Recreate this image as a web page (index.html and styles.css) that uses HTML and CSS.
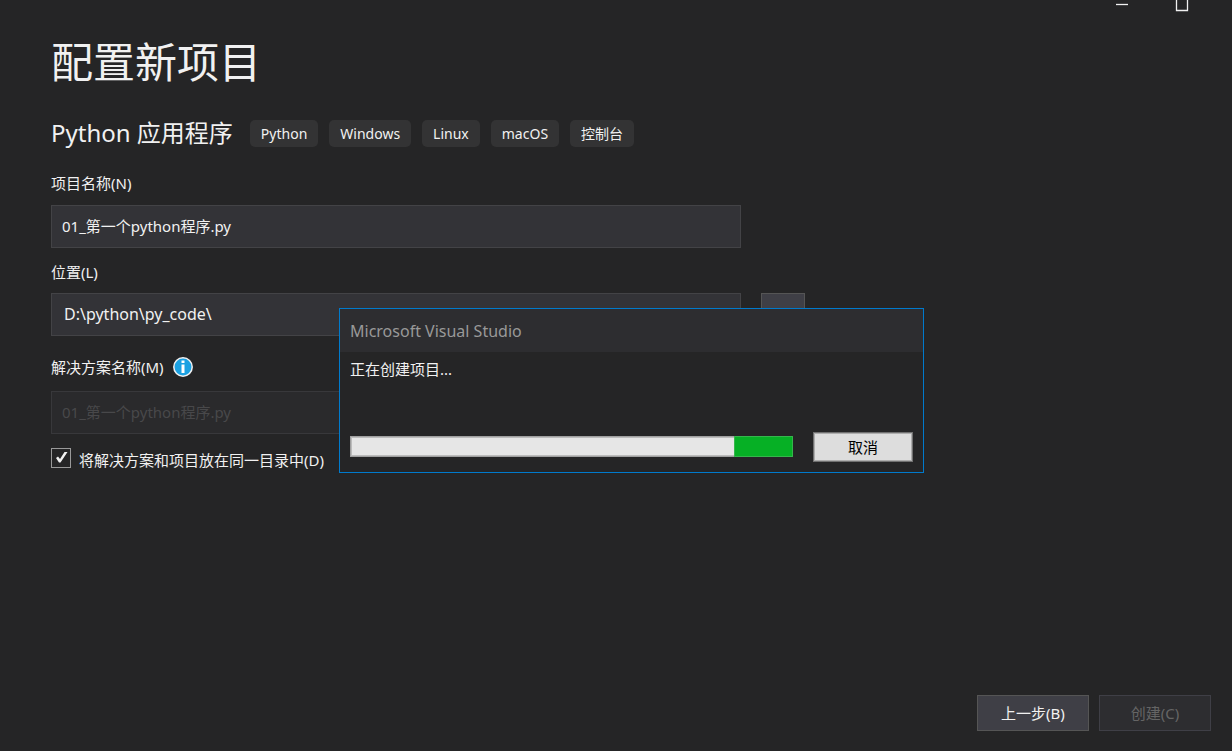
FILE: index.html
```html
<!DOCTYPE html>
<html lang="zh-CN">
<head>
<meta charset="utf-8">
<meta name="viewport" content="width=device-width, initial-scale=1">
<title>配置新项目</title>
<link rel="stylesheet" href="styles.css">
</head>
<body class="window">
<header class="titlebar">
  <button class="caption" type="button" aria-label="最小化"><svg width="14" height="12" viewBox="0 0 14 12"><path d="M1 4.500h12" stroke="#f1f1f1" stroke-width="1.300"/></svg></button>
  <button class="caption" type="button" aria-label="最大化"><svg width="14" height="12" viewBox="0 0 14 12"><path d="M1.500 -1v11.500h11v-11.500" fill="none" stroke="#f1f1f1" stroke-width="1.300"/></svg></button>
</header>
<main class="content">
  <h1 class="title">配置新项目</h1>
  <div class="template">
    <h2 class="template-name">Python 应用程序</h2>
    <ul class="tags">
      <li class="tag">Python</li>
      <li class="tag">Windows</li>
      <li class="tag">Linux</li>
      <li class="tag">macOS</li>
      <li class="tag">控制台</li>
    </ul>
  </div>
  <form class="form">
    <div class="field name-field">
      <label class="label" for="name">项目名称(N)</label>
      <input class="input" id="name" type="text" value="01_第一个python程序.py">
    </div>
    <div class="field location-field">
      <label class="label" for="location">位置(L)</label>
      <div class="input-row">
        <input class="input path" id="location" type="text" value="D:\python\py_code\">
        <button class="button browse" type="button" aria-label="浏览"></button>
      </div>
    </div>
    <div class="field solution-field">
      <div class="label-row">
        <label class="label" for="solution">解决方案名称(M)</label>
        <svg class="info" width="20" height="20" viewBox="0 0 20 20" aria-hidden="true"><circle cx="10" cy="10" r="9.200" fill="#1ba1e2" stroke="#f1f1f1" stroke-width="1.500"/><path d="M8.500 3.500h3v2.500h-3zM8.500 7.500h3v8.500h-3z" fill="#fff"/></svg>
      </div>
      <input class="input" id="solution" type="text" value="01_第一个python程序.py" disabled>
    </div>
    <div class="check-row">
      <input class="check" id="same" type="checkbox" checked>
      <label class="check-label" for="same">将解决方案和项目放在同一目录中(D)</label>
    </div>
  </form>
</main>
<footer class="footer">
  <button class="button action" type="button">上一步(B)</button>
  <button class="button action" type="button" disabled>创建(C)</button>
</footer>
<section class="dialog" role="dialog" aria-labelledby="dialog-title">
  <h2 class="dialog-title" id="dialog-title">Microsoft Visual Studio</h2>
  <div class="dialog-body">
    <p class="message">正在创建项目...</p>
    <div class="dialog-actions">
      <div class="progress" role="progressbar" aria-label="正在创建项目"><div class="progress-block"></div></div>
      <button class="cancel" type="button">取消</button>
    </div>
  </div>
</section>
</body>
</html>
```
FILE: styles.css
```css
* { box-sizing: border-box; }

.window {
  position: relative;
  display: flex;
  flex-direction: column;
  min-height: 100vh;
  margin: 0;
  background: #252526;
  color: #f1f1f1;
  font: 15px/20px "Noto Sans", "Noto Sans CJK SC", sans-serif;
}

button, input { font: inherit; color: inherit; }

.titlebar {
  display: flex;
  justify-content: flex-end;
  height: 12px;
  padding-right: 20px;
}
.caption {
  display: flex;
  justify-content: center;
  width: 60px;
  padding: 0;
  border: 0;
  background: none;
}

.content { flex: 1; padding: 22px 21px 24px 51px; }
.title { margin: 0; font-size: 42px; line-height: 56px; font-weight: 400; }
.template { display: flex; align-items: center; gap: 17px; margin-top: 27px; }
.template-name { margin: 0; font-size: 24px; line-height: 32px; font-weight: 400; }
.tags { display: flex; gap: 11px; margin: 0; padding: 0; list-style: none; }
.tag {
  padding: 4px 11px 3px;
  border-radius: 5px;
  background: #333334;
  font-size: 14px;
}

.form { max-width: 754px; margin-top: 24px; }
.field { display: flex; flex-direction: column; }
.name-field { gap: 12px; }
.location-field { gap: 11px; margin-top: 14px; }
.solution-field { gap: 14px; margin-top: 21px; }
.label-row { display: flex; align-items: center; gap: 9px; }
.input-row { display: flex; gap: 20px; }
.input {
  width: 100%;
  max-width: 690px;
  height: 43px;
  padding: 0 10px 2px;
  border: 1px solid #434346;
  background: #333337;
}
.path { padding-left: 12px; font-size: 16px; }
.input:disabled { border-color: #38383b; background: #2a2a2c; color: #48484a; }
.button { border: 1px solid #555555; background: #3f3f46; }
.browse { flex: 0 0 44px; height: 43px; }
.check-row { display: flex; align-items: flex-start; gap: 8px; margin-top: 14px; }
.check {
  appearance: none;
  width: 20px;
  height: 20px;
  margin: 0;
  border: 1px solid #999999;
  background: #252526 url("data:image/svg+xml,%3Csvg xmlns='http://www.w3.org/2000/svg' viewBox='0 0 18 18'%3E%3Cpath d='M4 9l2-1.500 2 2.500 4.500-7h3L8.500 13.500H7z' fill='%23f1f1f1'/%3E%3C/svg%3E");
}
.check-label { padding-top: 2px; }

.footer { display: flex; justify-content: flex-end; gap: 10px; padding: 0 21px 20px; }
.action { width: 112px; height: 36px; padding: 0; }
.action:disabled { border-color: #3f3f46; background: #2d2d30; color: #656565; }

.dialog {
  position: absolute;
  top: 308px;
  left: 339px;
  width: 585px;
  border: 1px solid #007acc;
  background: #252526;
}
.dialog-title {
  margin: 0;
  padding: 12px 10px 11px;
  background: #2d2d30;
  color: #999999;
  font-size: 16px;
  line-height: 20px;
  font-weight: 400;
}
.dialog-body { padding: 7px 10px 10px; }
.message { margin: 0; }
.dialog-actions { display: flex; align-items: flex-start; gap: 20px; margin-top: 53px; }
.progress {
  display: flex;
  justify-content: flex-end;
  flex: 1;
  height: 21px;
  margin-top: 4px;
  border: 1px solid #a0a0a0;
  background: #e6e6e6;
  box-shadow: inset 0 0 0 1px #bcbcbc;
}
.progress-block { width: 59px; margin: -1px; background: #06b025; border: 1px solid #35b64c; }
.cancel {
  width: 100px;
  height: 30px;
  padding: 0;
  border: 1px solid #707070;
  background: #dddddd;
  box-shadow: inset 0 0 0 1px #adadad;
  color: #000000;
}
```
